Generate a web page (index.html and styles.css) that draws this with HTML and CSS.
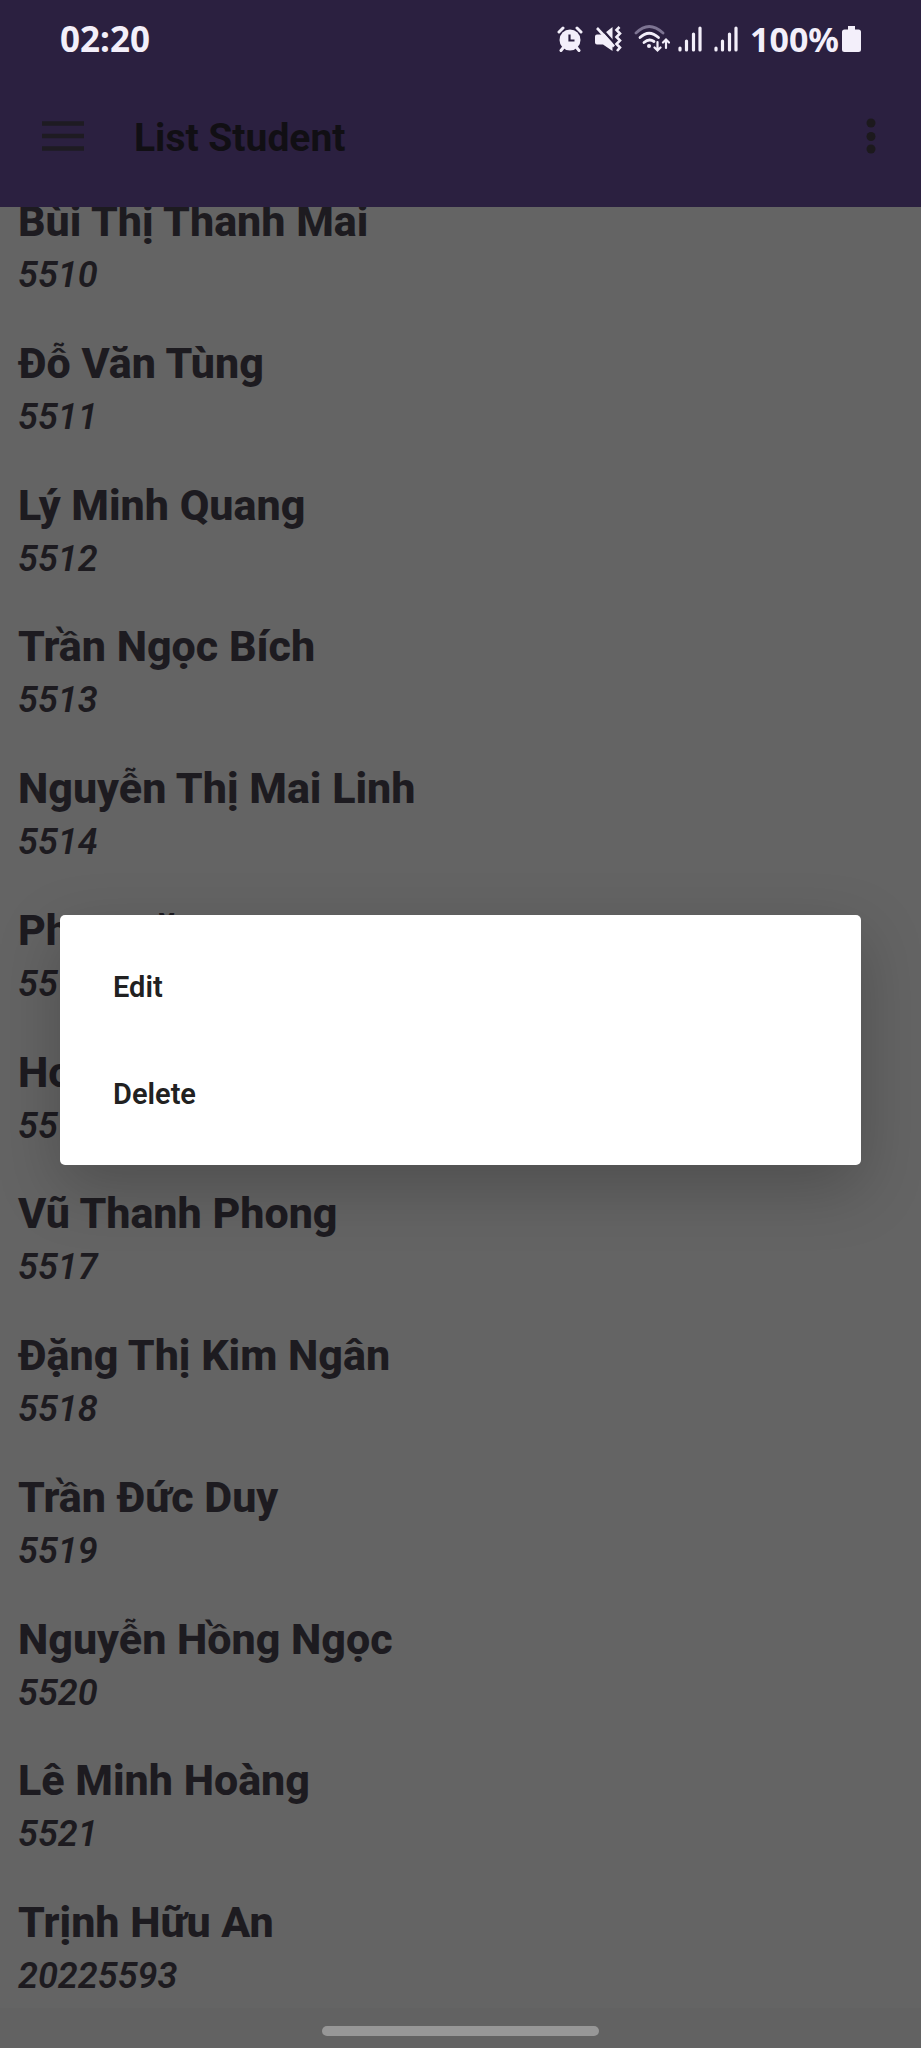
FILE: index.html
```html
<!DOCTYPE html>
<html lang="vi">
<head>
<meta charset="utf-8">
<meta name="viewport" content="width=device-width, initial-scale=1">
<title>List Student</title>
<link rel="stylesheet" href="styles.css">
</head>
<body>
<div class="screen">
  <header class="top">
    <div class="status">
      <time class="clock">02:20</time>
      <div class="indicators">
        <svg class="ind" width="26" height="26" viewBox="0 0 26 26" aria-hidden="true">
          <circle cx="13" cy="14" r="10.500" fill="#f3effa"/>
          <path d="M2 6L6 2M24 6L20 2M6 22L4 24.500M20 22L22 24.500" stroke="#f3effa" stroke-width="3" stroke-linecap="round"/>
          <path d="M12.500 8.500V14.500H17.500" fill="none" stroke="#2b2040" stroke-width="2.200"/>
        </svg>
        <svg class="ind" width="27" height="26" viewBox="0 0 27 26" aria-hidden="true">
          <path d="M2 8.500H8L17.500 1V25L8 18.500H2Q0 18.500 0 16.500V10.500Q0 8.500 2 8.500Z" fill="#f3effa"/>
          <path d="M0 0H11L7 8Z" fill="#2b2040"/>
          <path d="M4 0L21 19" stroke="#2b2040" stroke-width="2.500"/>
          <path d="M2 2L19 20.500" stroke="#f3effa" stroke-width="2.600"/>
          <path d="M24.500 1L21.500 4L25 7.500L21.500 11L25 14.500L21.500 18L25 21.500L22 25" fill="none" stroke="#f3effa" stroke-width="2.600"/>
        </svg>
        <svg class="ind ind-wifi" width="36" height="28" viewBox="0 0 36 28" aria-hidden="true">
          <g fill="none" stroke="#f3effa" stroke-width="2.800" stroke-linecap="round">
            <path d="M2 8Q15 -5 29 8" stroke="#7d7492"/>
            <path d="M6 12.500Q15 4 24.500 12.500M10 17.500Q15 13 20 16.500"/>
            <path d="M23.500 17V25M20.500 22.500L23.500 25.500L26.500 22.500M32 23V15M29 17.500L32 14.500L35 17.500" stroke-width="2.200"/>
          </g>
          <circle cx="15" cy="21" r="2" fill="#f3effa"/>
        </svg>
        <svg class="ind" width="24" height="26" viewBox="0 0 24 26" aria-hidden="true">
          <path d="M2 24V22M8.500 24V15M15.500 24V8M22 24V2" stroke="#f3effa" stroke-width="3.200" stroke-linecap="round"/>
        </svg>
        <svg class="ind" width="24" height="26" viewBox="0 0 24 26" aria-hidden="true">
          <path d="M2 24V22M8.500 24V15M15.500 24V8M22 24V2" stroke="#f3effa" stroke-width="3.200" stroke-linecap="round"/>
        </svg>
        <span class="charge">100%</span>
        <svg width="19" height="26" viewBox="0 0 19 26" aria-hidden="true">
          <path d="M6 0H13V3.500H16.500Q19 3.500 19 6V23.500Q19 26 16.500 26H2.500Q0 26 0 23.500V6Q0 3.500 2.500 3.500H6Z" fill="#f3effa"/>
        </svg>
      </div>
    </div>
    <div class="appbar">
      <button class="icon-button" type="button" aria-label="Menu">
        <svg width="42" height="30" viewBox="0 0 42 30"><path d="M0 2.500H42M0 15H42M0 27.500H42" stroke="#1e1b22" stroke-width="4.600"/></svg>
      </button>
      <h1 class="title">List Student</h1>
      <button class="icon-button" type="button" aria-label="More options">
        <svg width="10" height="36" viewBox="0 0 10 36"><g fill="#1c191d"><circle cx="5" cy="5" r="4.500"/><circle cx="5" cy="18.500" r="4.500"/><circle cx="5" cy="31" r="4.500"/></g></svg>
      </button>
    </div>
  </header>
  <main class="content">
    <ul class="students">
      <li class="student"><span class="name">Bùi Thị Thanh Mai</span><span class="code">5510</span></li>
      <li class="student"><span class="name">Đỗ Văn Tùng</span><span class="code">5511</span></li>
      <li class="student"><span class="name">Lý Minh Quang</span><span class="code">5512</span></li>
      <li class="student"><span class="name">Trần Ngọc Bích</span><span class="code">5513</span></li>
      <li class="student"><span class="name">Nguyễn Thị Mai Linh</span><span class="code">5514</span></li>
      <li class="student"><span class="name">Phan Văn</span><span class="code">5515</span></li>
      <li class="student"><span class="name">Hoàng</span><span class="code">5516</span></li>
      <li class="student"><span class="name">Vũ Thanh Phong</span><span class="code">5517</span></li>
      <li class="student"><span class="name">Đặng Thị Kim Ngân</span><span class="code">5518</span></li>
      <li class="student"><span class="name">Trần Đức Duy</span><span class="code">5519</span></li>
      <li class="student"><span class="name">Nguyễn Hồng Ngọc</span><span class="code">5520</span></li>
      <li class="student"><span class="name">Lê Minh Hoàng</span><span class="code">5521</span></li>
      <li class="student"><span class="name">Trịnh Hữu An</span><span class="code">20225593</span></li>
    </ul>
  </main>
  <footer class="navbar"><div class="handle"></div></footer>
  <div class="overlay">
    <div class="menu" role="menu">
      <button class="menu-item" type="button" role="menuitem">Edit</button>
      <button class="menu-item" type="button" role="menuitem">Delete</button>
    </div>
  </div>
</div>
</body>
</html>
```
FILE: styles.css
```css
* {
  box-sizing: border-box;
}

body {
  margin: 0;
  font-family: Roboto, "Noto Sans", sans-serif;
  background: #646464;
}

.screen {
  position: relative;
  display: flex;
  flex-direction: column;
  height: 100vh;
  overflow: hidden;
}

.top {
  position: relative;
  z-index: 1;
  background: #2b2040;
}

.status {
  display: flex;
  align-items: center;
  justify-content: space-between;
  height: 78px;
  padding: 0 60px;
  color: #f3effa;
  font: 700 34px/48px "Noto Sans", sans-serif;
}

.clock {
  font-size: 35px;
}

.indicators {
  display: flex;
  align-items: center;
}

.ind {
  margin-right: 12px;
}

.ind-wifi {
  margin-right: 8px;
}

.charge {
  margin-right: 3px;
}

.appbar {
  display: flex;
  align-items: center;
  height: 129px;
  padding: 0 45px 14px 42px;
}

.icon-button {
  display: flex;
  padding: 0;
  border: 0;
  background: none;
}

.title {
  flex: 1;
  margin: 0 0 0 50px;
  padding-top: 4px;
  color: #110f14;
  font-size: 39px;
  line-height: 48px;
  font-weight: 700;
}

.content {
  flex: 1;
  min-height: 0;
}

.students {
  display: flex;
  flex-direction: column;
  justify-content: space-between;
  height: 100%;
  margin: 0;
  padding: 0 18px 8px;
  list-style: none;
  color: #1d1b20;
}

.student {
  display: flex;
  flex-direction: column;
}

.student:first-child {
  margin-top: -14px;
}

.name {
  font-size: 43px;
  line-height: 56px;
  font-weight: 800;
}

.code {
  padding-top: 2px;
  font-size: 36px;
  line-height: 48px;
  font-weight: 600;
  font-style: italic;
}

.navbar {
  display: flex;
  justify-content: center;
  align-items: center;
  height: 40px;
  padding-top: 6px;
  background: #626262;
}

.handle {
  width: 30%;
  height: 10px;
  border-radius: 5px;
  background: #979797;
}

.overlay {
  position: absolute;
  z-index: 2;
  inset: 0;
  display: flex;
  align-items: center;
  padding: 31px 60px 0;
}

.menu {
  flex: 1;
  padding: 18px 0;
  border-radius: 5px;
  background: #fff;
  box-shadow: 0 22px 64px rgba(0, 0, 0, 0.22);
}

.menu-item {
  display: block;
  width: 100%;
  height: 107px;
  padding: 2px 53px 0;
  border: 0;
  background: none;
  color: #212121;
  font: 600 29px/40px Roboto, sans-serif;
  text-align: left;
}
```
